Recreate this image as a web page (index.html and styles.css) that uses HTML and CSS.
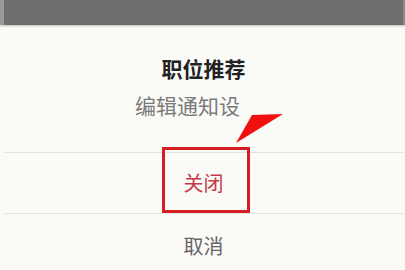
FILE: index.html
```html
<!DOCTYPE html>
<html lang="zh">
<head>
<meta charset="utf-8">
<link rel="stylesheet" href="styles.css">
</head>
<body>
<div class="page">
  <div class="topbar"></div>
  <div class="sheet">
    <div class="head">
      <div class="title">职位推荐</div>
      <div class="subtitle">编辑通知设</div>
    </div>
    <div class="row close">关闭</div>
    <div class="row cancel">取消</div>
  </div>
  <div class="highlight"></div>
  <svg class="arrow" width="405" height="270" viewBox="0 0 405 270">
    <polygon points="252,115 283,114 236,143" fill="#f01010"/>
  </svg>
</div>
</body>
</html>
```

FILE: styles.css
```css
html, body {
  margin: 0;
  padding: 0;
  width: 405px;
  height: 270px;
  overflow: hidden;
  background: #fafaf7;
  font-family: "Noto Sans CJK SC", "Noto Sans", sans-serif;
}
.page {
  position: relative;
  width: 405px;
  height: 270px;
}
.topbar {
  height: 25px;
  background: #6e6e6e;
  border-left: 4px solid #9a9a9a;
  border-right: 2px solid #8a8a8a;
  box-shadow: 0 1px 2px rgba(0,0,0,0.25);
}
.sheet {
  margin-left: 4px;
  margin-right: 2px;
}
.head {
  padding-top: 28px;
  padding-bottom: 32px;
  border-bottom: 1px solid #e2e2df;
}
.title {
  height: 30px;
  line-height: 30px;
  text-align: center;
  font-size: 21px;
  font-weight: bold;
  color: #222;
}
.subtitle {
  margin-top: 7px;
  height: 30px;
  line-height: 30px;
  padding-left: 131px;
  font-size: 21px;
  color: #7a7a7a;
}
.row {
  height: 60px;
  line-height: 60px;
  text-align: center;
  font-size: 20px;
}
.close {
  color: #c33a4a;
  border-bottom: 1px solid #e2e2df;
}
.cancel {
  color: #666;
  line-height: 64px;
}
.highlight {
  position: absolute;
  left: 162px;
  top: 147px;
  width: 82px;
  height: 60px;
  border: 3px solid #d41e24;
}
.arrow {
  position: absolute;
  left: 0;
  top: 0;
}
```
